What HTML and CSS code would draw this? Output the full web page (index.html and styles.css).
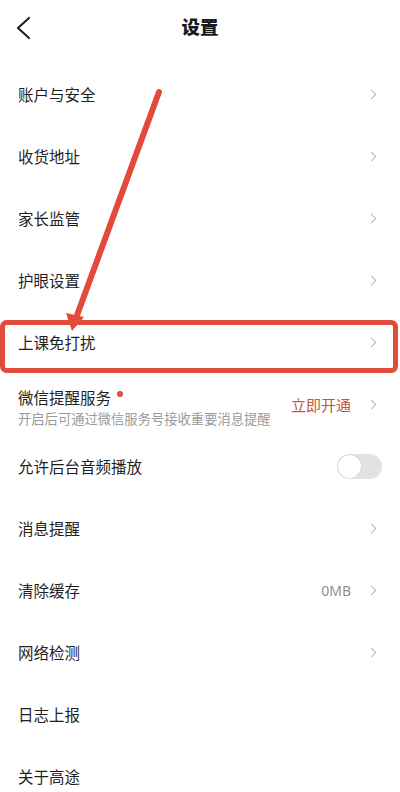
FILE: index.html
```html
<!DOCTYPE html>
<html lang="zh-CN">
<head>
    <meta charset="UTF-8">
    <meta name="viewport" content="width=device-width, initial-scale=1.0">
    <title>设置</title>
    <link rel="stylesheet" href="styles.css">
</head>
<body>
    <div class="page">
        <header class="nav">
            <div class="back">
                <svg width="16" height="24" viewBox="0 0 16 24">
                    <polyline points="13,2 2,12 13,22" fill="none" stroke="#222" stroke-width="2.2" stroke-linecap="round" stroke-linejoin="round"/>
                </svg>
            </div>
            <h1 class="title">设置</h1>
            <div class="nav-spacer"></div>
        </header>

        <ul class="list">
            <li class="row"><span class="label">账户与安全</span><span class="chev"></span></li>
            <li class="row"><span class="label">收货地址</span><span class="chev"></span></li>
            <li class="row"><span class="label">家长监管</span><span class="chev"></span></li>
            <li class="row"><span class="label">护眼设置</span><span class="chev"></span></li>
            <li class="row"><span class="label">上课免打扰</span><span class="chev"></span></li>
            <li class="row">
                <div class="label two-line">
                    <div class="main">微信提醒服务<i class="dot"></i></div>
                    <div class="sub">开启后可通过微信服务号接收重要消息提醒</div>
                </div>
                <span class="action">立即开通</span><span class="chev"></span>
            </li>
            <li class="row"><span class="label">允许后台音频播放</span><span class="switch"><i class="knob"></i></span></li>
            <li class="row"><span class="label">消息提醒</span><span class="chev"></span></li>
            <li class="row"><span class="label">清除缓存</span><span class="value">0MB</span><span class="chev"></span></li>
            <li class="row"><span class="label">网络检测</span><span class="chev"></span></li>
            <li class="row"><span class="label">日志上报</span></li>
            <li class="row"><span class="label">关于高途</span></li>
        </ul>

        <!-- annotation drawn over the screenshot -->
        <svg class="markup" width="400" height="792" viewBox="0 0 400 792">
            <rect x="2.5" y="322.5" width="393" height="48" rx="4" fill="none" stroke="#e24b3b" stroke-width="5"/>
            <line x1="159" y1="92" x2="76" y2="318" stroke="#e24b3b" stroke-width="6" stroke-linecap="round"/>
            <polygon points="72,331 66,313 84,317" fill="#e24b3b"/>
        </svg>
    </div>
</body>
</html>
```

FILE: styles.css
```css
* {
    margin: 0;
    padding: 0;
    box-sizing: border-box;
}

body {
    background: #fff;
    font-family: "Noto Sans CJK SC", "Noto Sans", sans-serif;
    color: #1f1f1f;
}

.page {
    position: relative;
    width: 400px;
    height: 792px;
    overflow: hidden;
}

.nav {
    height: 63px;
    display: grid;
    grid-template-columns: 60px 1fr 60px;
    align-items: center;
    padding-bottom: 11px;
}

.back {
    padding-left: 16px;
    display: flex;
    align-items: center;
    padding-top: 3px;
}

.title {
    text-align: center;
    font-size: 18.5px;
    line-height: 24px;
    font-weight: 900;
    color: #1a1a1a;
}

.list {
    list-style: none;
}

.row {
    height: 62px;
    display: flex;
    align-items: center;
    padding: 0 23px 0 18px;
}

.label {
    flex: 1;
    font-size: 15.5px;
    line-height: 20px;
}

.two-line {
    display: flex;
    flex-direction: column;
    gap: 3px;
    margin-top: 6px;
}

.main {
    display: flex;
    align-items: center;
}

.dot {
    width: 6px;
    height: 6px;
    border-radius: 50%;
    background: #d9503a;
    margin-left: 6px;
    margin-top: -5px;
}

.sub {
    font-size: 13.3px;
    line-height: 18px;
    color: #9a9a9a;
}

.action {
    font-size: 15px;
    color: #c4553b;
    margin-right: 17px;
}

.value {
    font-family: "Noto Sans", sans-serif;
    font-size: 14px;
    color: #8f8f8f;
    margin-right: 17px;
}

.chev {
    width: 7px;
    height: 7px;
    border-top: 1.2px solid #b5b5b5;
    border-right: 1.2px solid #b5b5b5;
    transform: rotate(45deg);
    margin-right: 2px;
}

.switch {
    width: 45px;
    height: 25px;
    border-radius: 13px;
    background: #e2e2e2;
    display: flex;
    align-items: center;
    padding: 1px;
    margin-right: -5px;
}

.knob {
    width: 23px;
    height: 23px;
    border-radius: 50%;
    background: #fff;
    box-shadow: 0 0 1px rgba(0, 0, 0, 0.25);
}

.markup {
    position: absolute;
    top: 0;
    left: 0;
    pointer-events: none;
}
```
